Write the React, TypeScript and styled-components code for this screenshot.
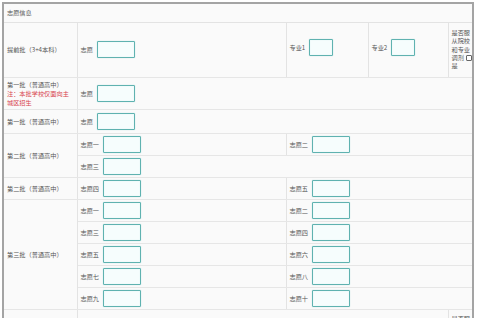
import React from 'react';
import styled, { createGlobalStyle } from 'styled-components';

const GlobalStyle = createGlobalStyle`
  html, body {
    margin: 0;
    padding: 0;
    background: #ffffff;
  }
  body {
    font-family: "Noto Sans CJK SC", "Noto Sans", sans-serif;
    color: #555;
    overflow: hidden;
  }
`;

const Frame = styled.div`
  margin: 2px 0 0 2px;
  width: 468px;
  border: 2px solid #a4a4a4;
  border-bottom: none;
  background: #fafafa;
`;

const SectionTitle = styled.div`
  height: 18px;
  line-height: 18px;
  padding-left: 3px;
  font-size: 6.2px;
  color: #555;
  border-bottom: 1px solid #e3e3e3;
`;

const Table = styled.table`
  width: 468px;
  table-layout: fixed;
  border-collapse: collapse;
  font-size: 6.2px;
  color: #555;
`;

const Row = styled.tr<{ $h: number }>`
  height: ${p => p.$h}px;
`;

const LabelCell = styled.td`
  padding: 2px 3px;
  vertical-align: middle;
  line-height: 9px;
  border-bottom: 1px solid #e6e6e6;
  border-right: 1px solid #e3e3e3;
`;

const Cell = styled.td`
  padding: 0 3px;
  vertical-align: middle;
  border-bottom: 1px solid #e6e6e6;
  border-left: 1px solid #e3e3e3;
`;

const Note = styled.span`
  display: block;
  color: #d8434c;
`;

const Field = styled.div<{ $lift?: number }>`
  display: flex;
  align-items: center;
  gap: 4px;
  margin-top: ${p => (p.$lift ? -p.$lift : 0)}px;
`;

const FieldLabel = styled.span`
  white-space: nowrap;
`;

const Box = styled.input<{ $w: number }>`
  box-sizing: border-box;
  width: ${p => p.$w}px;
  height: 17px;
  margin: 0;
  padding: 0;
  border: 1px solid #5fb2b0;
  border-radius: 1px;
  background: #f6fdfd;
  box-shadow: 0 0 1px #9ad6d4, inset 0 0 1px #c9ecec;
  outline: none;
`;

const AdjustCell = styled.td<{ $top?: boolean }>`
  padding: ${p => (p.$top ? '5px 0 0 3px' : '0 0 0 3px')};
  vertical-align: ${p => (p.$top ? 'top' : 'middle')};
  line-height: 8.4px;
  border-bottom: 1px solid #e6e6e6;
  border-left: 1px solid #e3e3e3;
  word-break: break-all;
`;

const Check = styled.input`
  appearance: none;
  box-sizing: border-box;
  width: 6px;
  height: 6px;
  margin: 0 0 0 2px;
  border: 1px solid #666;
  border-radius: 1px;
  background: #fff;
  vertical-align: -1px;
`;

const PairRow: React.FC<{ left: string; right?: string; label?: React.ReactNode; span?: number }> = ({ left, right, label, span }) => (
  <Row $h={22}>
    {label && <LabelCell rowSpan={span}>{label}</LabelCell>}
    <Cell colSpan={right ? 1 : 4}>
      <Field>
        <FieldLabel>{left}</FieldLabel>
        <Box $w={38} />
      </Field>
    </Cell>
    {right && (
      <Cell colSpan={3}>
        <Field>
          <FieldLabel>{right}</FieldLabel>
          <Box $w={38} />
        </Field>
      </Cell>
    )}
  </Row>
);

const App: React.FC = () => {
  const third = [
    ['志愿一', '志愿二'],
    ['志愿三', '志愿四'],
    ['志愿五', '志愿六'],
    ['志愿七', '志愿八'],
    ['志愿九', '志愿十'],
  ];

  return (
    <>
      <GlobalStyle />
      <Frame>
        <SectionTitle>志愿信息</SectionTitle>
        <Table>
          <colgroup>
            <col style={{ width: 73 }} />
            <col style={{ width: 209 }} />
            <col style={{ width: 82 }} />
            <col style={{ width: 80 }} />
            <col style={{ width: 24 }} />
          </colgroup>
          <tbody>
            <Row $h={54}>
              <LabelCell>提前批（3+4本科）</LabelCell>
              <Cell>
                <Field>
                  <FieldLabel>志愿</FieldLabel>
                  <Box $w={38} />
                </Field>
              </Cell>
              <Cell>
                <Field $lift={4}>
                  <FieldLabel>专业1</FieldLabel>
                  <Box $w={24} />
                </Field>
              </Cell>
              <Cell>
                <Field $lift={4}>
                  <FieldLabel>专业2</FieldLabel>
                  <Box $w={24} />
                </Field>
              </Cell>
              <AdjustCell>
                是否服从院校和专业调剂<Check type="checkbox" />是
              </AdjustCell>
            </Row>

            <Row $h={31}>
              <LabelCell>
                第一批（普通高中）
                <Note>注：本批学校仅面向主城区招生</Note>
              </LabelCell>
              <Cell colSpan={4}>
                <Field>
                  <FieldLabel>志愿</FieldLabel>
                  <Box $w={38} />
                </Field>
              </Cell>
            </Row>

            <Row $h={24}>
              <LabelCell>第一批（普通高中）</LabelCell>
              <Cell colSpan={4}>
                <Field>
                  <FieldLabel>志愿</FieldLabel>
                  <Box $w={38} />
                </Field>
              </Cell>
            </Row>

            <PairRow label="第二批（普通高中）" span={2} left="志愿一" right="志愿二" />
            <PairRow left="志愿三" />
            <PairRow label="第二批（普通高中）" left="志愿四" right="志愿五" />

            {third.map(([l, r], i) => (
              <PairRow
                key={l}
                label={i === 0 ? '第三批（普通高中）' : undefined}
                span={5}
                left={l}
                right={r}
              />
            ))}

            <Row $h={54}>
              <LabelCell />
              <Cell colSpan={3} />
              <AdjustCell $top>是否服从院校和专业调剂</AdjustCell>
            </Row>
          </tbody>
        </Table>
      </Frame>
    </>
  );
};

export default App;
